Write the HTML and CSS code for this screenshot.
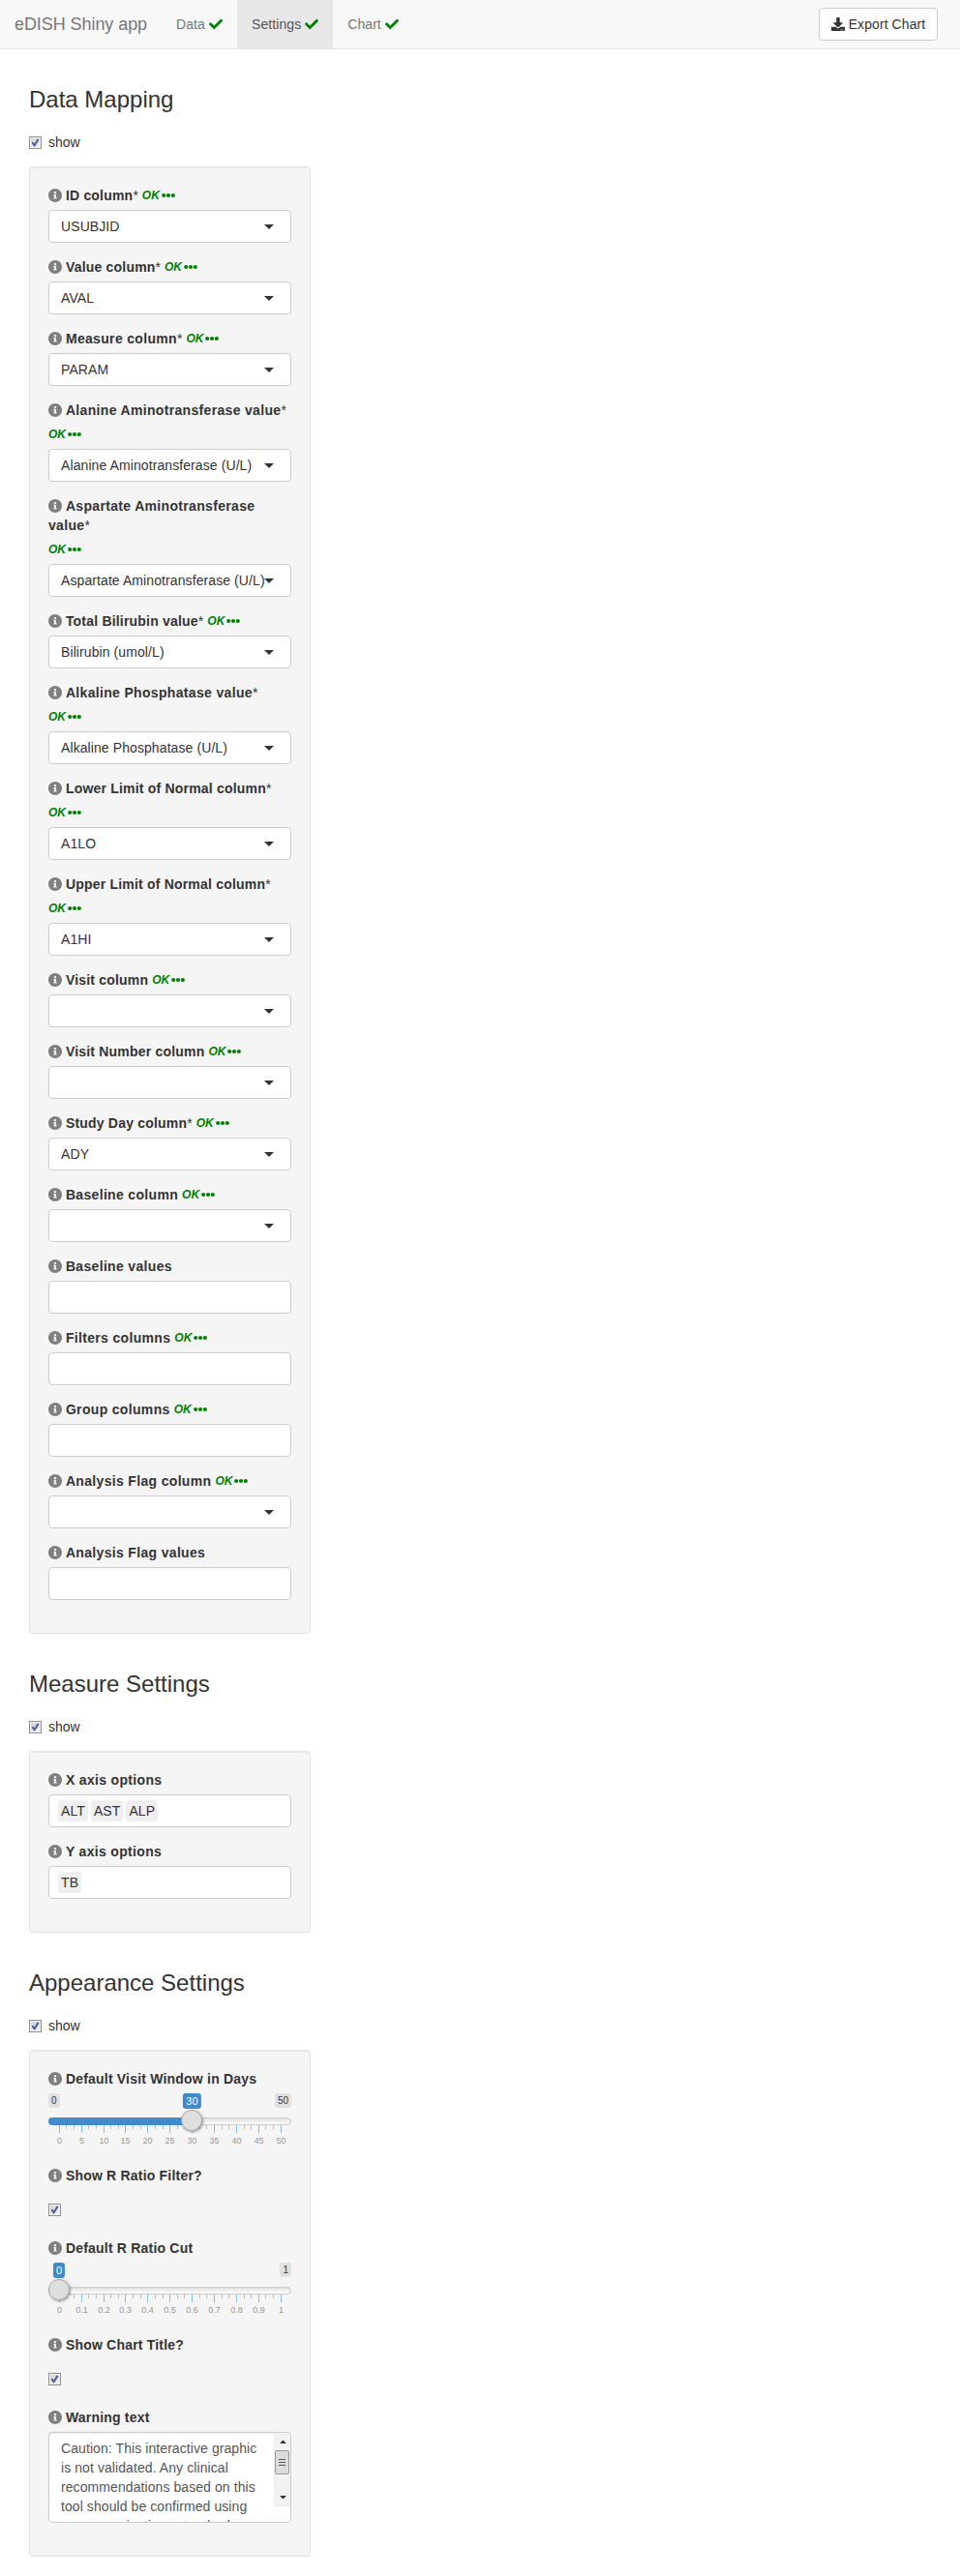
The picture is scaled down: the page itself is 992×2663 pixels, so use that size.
FILE: index.html
```html
<!DOCTYPE html>
<html lang="en">
<head>
<meta charset="utf-8">
<title>eDISH Shiny app</title>
<link rel="stylesheet" href="styles.css">
</head>
<body>
<svg class="sprite" aria-hidden="true">
  <symbol id="check" viewBox="0 0 512 512"><path d="M173.898 439.404l-166.4-166.4c-9.997-9.997-9.997-26.206 0-36.204l36.203-36.204c9.997-9.998 26.207-9.998 36.204 0L192 312.69 432.095 72.596c9.997-9.997 26.207-9.997 36.204 0l36.203 36.204c9.997 9.997 9.997 26.206 0 36.204l-294.4 294.401c-9.998 9.997-26.207 9.997-36.204-.001z"/></symbol>
  <symbol id="info" viewBox="8 8 496 496"><path d="M256 8C119 8 8 119 8 256s111 248 248 248 248-111 248-248S393 8 256 8zm0 110c23 0 42 19 42 42s-19 42-42 42-42-19-42-42 19-42 42-42zm56 254c0 7-5 12-12 12h-88c-7 0-12-5-12-12v-24c0-7 5-12 12-12h12v-64h-12c-7 0-12-5-12-12v-24c0-7 5-12 12-12h64c7 0 12 5 12 12v100h12c7 0 12 5 12 12v24z"/></symbol>
  <symbol id="dots" viewBox="0 0 14 14"><circle cx="2.2" cy="7" r="2.1"/><circle cx="7" cy="7" r="2.1"/><circle cx="11.8" cy="7" r="2.1"/></symbol>
  <symbol id="download" viewBox="0 0 512 512"><path d="M216 0h80c13 0 24 11 24 24v168h87.700c17.800 0 26.700 21.500 14.100 34.100L269.700 378.300c-7.500 7.500-19.800 7.500-27.300 0L90.100 226.100c-12.600-12.600-3.700-34.100 14.100-34.100H192V24c0-13 11-24 24-24zm296 376v112c0 13-11 24-24 24H24c-13 0-24-11-24-24V376c0-13 11-24 24-24h146.700l49 49c20 20 52.500 20 72.600 0l49-49H488c13 0 24 11 24 24zm-124 88c0-11-9-20-20-20s-20 9-20 20 9 20 20 20 20-9 20-20zm64 0c0-11-9-20-20-20s-20 9-20 20 9 20 20 20 20-9 20-20z"/></symbol>
  <symbol id="tick" viewBox="0 0 13 13"><path d="M3.400 6.200L5.600 9.300 9.600 2.900" fill="none" stroke="#4a5f97" stroke-width="2"/></symbol>
</svg>

<nav class="navbar">
  <span class="brand">eDISH Shiny app</span>
  <a class="tab">Data <svg class="ic ok"><use href="#check"/></svg></a>
  <a class="tab active">Settings <svg class="ic ok"><use href="#check"/></svg></a>
  <a class="tab">Chart <svg class="ic ok"><use href="#check"/></svg></a>
  <button class="export"><svg class="ic"><use href="#download"/></svg> Export Chart</button>
</nav>

<main id="main"></main>
<script src="app.js"></script>
</body>
</html>
```

FILE: styles.css
```css
* { box-sizing: border-box; }
body { margin: 0; background: #fff; color: #333; font: 14px/20px "Liberation Sans", Arial, sans-serif; }
.sprite { position: absolute; width: 0; height: 0; }
.navbar { display: flex; height: 51px; background: #f8f8f8; border-bottom: 1px solid #e7e7e7; color: #777; }
.brand { width: 167px; padding: 15px 0 0 15px; font-size: 18px; letter-spacing: -.07px; white-space: nowrap; }
.tab { min-width: 78px; padding: 15px; white-space: nowrap; letter-spacing: .08px; }
.tab.active { min-width: 99px; background: #e7e7e7; color: #555; }
.ic { width: 14px; height: 14px; fill: currentColor; vertical-align: -2px; }
.ok { fill: green; }
.export { width: 123px; height: 34px; margin: 8px 23px 0 auto; padding: 0; border: 1px solid #ccc; border-radius: 4px; background: #fff; color: #333; font: inherit; letter-spacing: .08px; white-space: nowrap; }
main { width: 321px; padding: 0 0 20px 30px; }
h3 { margin: 0; padding-top: 38px; height: 65px; font-size: 24px; line-height: 27px; font-weight: 400; white-space: nowrap; }
.show { display: flex; align-items: center; gap: 7px; height: 20px; margin: 21px 0 15px; }
.box { display: block; width: 13px; height: 13px; border: 1px solid #8e8f8f; background: linear-gradient(135deg, #cbcfd5, #f6f6f6); box-shadow: inset 0 0 0 1px #f4f4f4; }
.box svg { display: block; width: 13px; height: 13px; margin: -1px; }
.well { padding: 19px; border: 1px solid #e3e3e3; border-radius: 4px; background: #f5f5f5; box-shadow: inset 0 1px 1px rgba(0,0,0,.05); }
.field { padding-bottom: 15px; }
.label { display: flex; flex-wrap: wrap; column-gap: 4px; min-height: 25px; }
.name { display: block; font-weight: 700; margin-bottom: 5px; }
.name .ic { fill: #808080; }
.txt { letter-spacing: .2px; }
.txt.wide { letter-spacing: .33px; }
.star { font-weight: 400; }
.status { height: 20px; margin-bottom: 5px; color: green; font-size: 12px; font-style: italic; font-weight: 700; white-space: nowrap; }
.status .ic { vertical-align: -3px; margin-left: 2px; }
.control { display: flex; align-items: center; position: relative; height: 34px; border: 1px solid #ccc; border-radius: 4px; background: #fff; padding: 0 12px; letter-spacing: .09px; white-space: nowrap; }
.control.multi { padding: 0 9px; gap: 3px; }
.chip { height: 22px; padding: 1px 3px; border-radius: 3px; background: #efefef; }
.caret { position: absolute; right: 17px; top: 14px; border: 5px solid transparent; border-top-color: #333; border-bottom: 0; }
.lone { height: 35px; padding-top: 14px; }
.slider { position: relative; height: 60px; }
.slider > * { position: absolute; }
.lim, .val { top: 0; height: 15px; padding: 1px 3px; border-radius: 3px; background: #e1e1e1; font-size: 10px; line-height: 13px; color: #333; }
.lim.min { left: 0; }
.lim.max { right: 0; }
.val { height: 16px; font-size: 11px; line-height: 14px; background: #428bca; color: #fff; transform: translateX(-50%); }
.line { left: 0; right: 0; top: 25px; height: 8px; border: 1px solid #ccc; border-radius: 8px; background: linear-gradient(#dedede, #fff); }
.bar { left: 0; top: 25px; height: 8px; border-radius: 8px 0 0 8px; background: #428bca; }
.handle { top: 17px; width: 22px; height: 22px; border: 1px solid #ababab; border-radius: 50%; background: #dedede; box-shadow: 1px 1px 3px rgba(0,0,0,.35); }
.t { top: 33px; width: 1px; height: 4px; background: #bbb; }
.t.big { height: 8px; background: #8fbbdf; }
.n { top: 43px; font-size: 9px; line-height: 12px; color: #999; transform: translateX(-50%); }
.area { position: relative; height: 94px; overflow: hidden; border: 1px solid #ccc; border-radius: 4px; background: #fff; box-shadow: inset 0 1px 1px rgba(0,0,0,.075); padding: 6px 12px; color: #555; letter-spacing: .08px; white-space: nowrap; }
.scroll { position: absolute; top: 0; right: 0; width: 17px; height: 76px; border-left: 1px solid #eee; border-bottom: 1px solid #e8e8e8; background: #f2f2f2; }
.scroll svg { display: block; width: 16px; height: 75px; }
```

FILE: app.js
```javascript
const icon = (id, cls = "ic") => `<svg class="${cls}"><use href="#${id}"/></svg>`;
const box = `<span class="box">${icon("tick", "")}</span>`;
const wide = /Amino|Alkaline|Baseline|Filters|Group|Flag|Measure|axis/;
const label = (name, star, ok) => `<div class="label"><span class="name">${icon("info")} <span class="txt${wide.test(name) ? " wide" : ""}">${name}</span>${star ? '<span class="star">*</span>' : ""}</span>${ok ? `<span class="status">OK${icon("dots")}</span>` : ""}</div>`;
const field = (l, body) => `<div class="field">${l}${body}</div>`;
const select = (name, star, value) => field(label(name, star, true), `<div class="control">${value}<i class="caret"></i></div>`);
const multi = (name, ok, values) => field(label(name, false, ok), `<div class="control multi">${values.map(v => `<span class="chip">${v}</span>`).join("")}</div>`);
const check = name => field(label(name), `<div class="lone">${box}</div>`);

function slider(name, max, step, frac) {
  const x0 = 11, span = 229;
  let s = "";
  for (let i = 0; i <= 30; i++) {
    const x = x0 + Math.round(span * i / 30 - 0.3);
    s += `<i class="t${i % 3 ? "" : " big"}" style="left:${x}px"></i>`;
    if (i % 3 === 0) s += `<span class="n" style="left:${x + 0.5}px">${+(step * i / 3).toFixed(1)}</span>`;
  }
  const h = span * frac;
  return field(label(name), `<div class="slider">${frac ? '<span class="lim min">0</span>' : ""}<span class="lim max">${max}</span><span class="line"></span>${frac ? `<span class="bar" style="width:${h + x0}px"></span>` : ""}${s}<span class="val" style="left:${h + x0}px">${max * frac}</span><span class="handle" style="left:${Math.round(h)}px"></span></div>`);
}

const section = (title, fields) => `<h3>${title}</h3><div class="show">${box}<span>show</span></div><section class="well">${fields.join("")}</section>`;

const scrollbar = `<div class="scroll"><svg viewBox="0 0 16 75"><path d="M5 11L8.500 7.500 12 11z" fill="#333"/><rect x=".5" y="18.500" width="14" height="24" rx="1" fill="#dcdcdc" stroke="#999"/><path d="M4 27.500h7M4 30.500h7M4 33.500h7" stroke="#555"/><path d="M5 65L8.500 68.500 12 65z" fill="#333"/></svg></div>`;

document.getElementById("main").innerHTML =
  section("Data Mapping", [
    select("ID column", 1, "USUBJID"),
    select("Value column", 1, "AVAL"),
    select("Measure column", 1, "PARAM"),
    select("Alanine Aminotransferase value", 1, "Alanine Aminotransferase (U/L)"),
    select("Aspartate Aminotransferase value", 1, "Aspartate Aminotransferase (U/L)"),
    select("Total Bilirubin value", 1, "Bilirubin (umol/L)"),
    select("Alkaline Phosphatase value", 1, "Alkaline Phosphatase (U/L)"),
    select("Lower Limit of Normal column", 1, "A1LO"),
    select("Upper Limit of Normal column", 1, "A1HI"),
    select("Visit column", 0, ""),
    select("Visit Number column", 0, ""),
    select("Study Day column", 1, "ADY"),
    select("Baseline column", 0, ""),
    multi("Baseline values", false, []),
    multi("Filters columns", true, []),
    multi("Group columns", true, []),
    select("Analysis Flag column", 0, ""),
    multi("Analysis Flag values", false, [])
  ]) +
  section("Measure Settings", [
    multi("X axis options", false, ["ALT", "AST", "ALP"]),
    multi("Y axis options", false, ["TB"])
  ]) +
  section("Appearance Settings", [
    slider("Default Visit Window in Days", 50, 5, 0.6),
    check("Show R Ratio Filter?"),
    slider("Default R Ratio Cut", 1, 0.1, 0),
    check("Show Chart Title?"),
    field(label("Warning text"), `<div class="area">Caution: This interactive graphic<br>is not validated. Any clinical<br>recommendations based on this<br>tool should be confirmed using<br>your organizations standard${scrollbar}</div>`)
  ]);
```
